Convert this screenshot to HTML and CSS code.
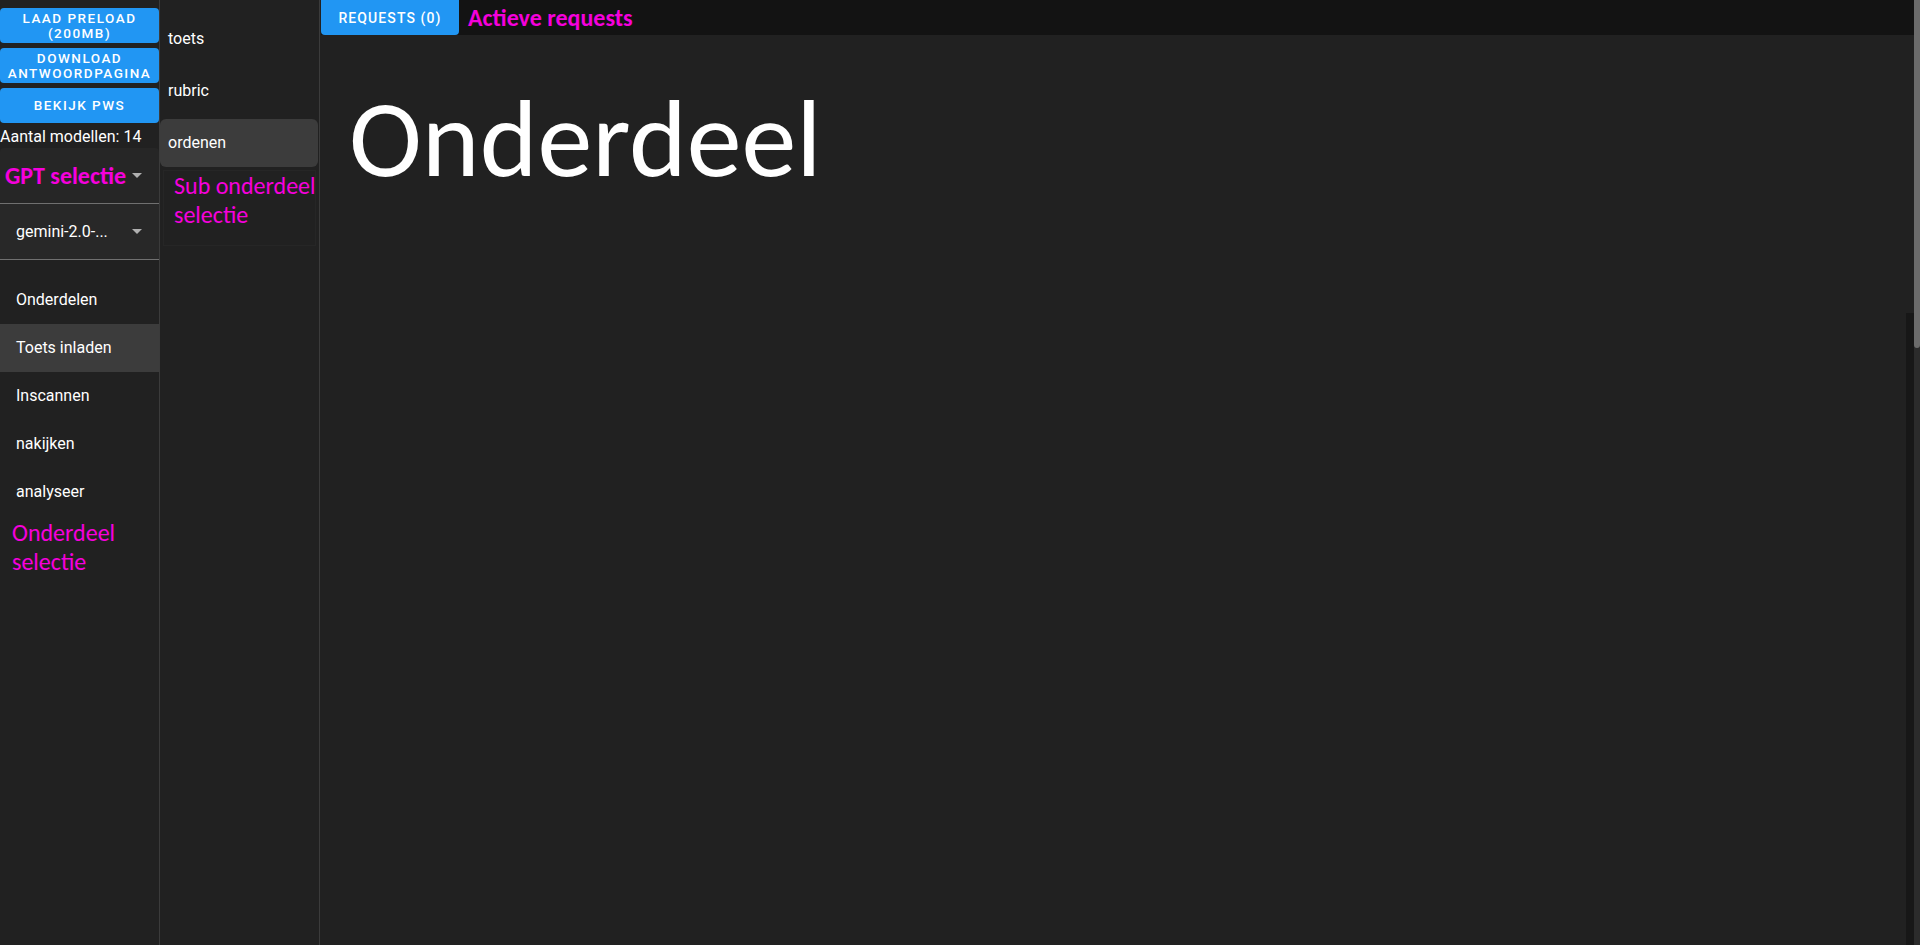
FILE: index.html
```html
<!DOCTYPE html>
<html>
<head>
<meta charset="utf-8">
<link rel="stylesheet" href="styles.css">
</head>
<body>
<div class="app">
  <aside class="side">
    <div class="btns">
      <button class="btn">Laad preload<br>(200MB)</button>
      <button class="btn">Download<br>antwoordpagina</button>
      <button class="btn">Bekijk PWS</button>
    </div>
    <div class="count">Aantal modellen: 14</div>
    <div class="select gpt"><span class="note bold">GPT selectie</span><span class="caret"></span></div>
    <div class="select model"><span class="val">gemini-2.0-...</span><span class="caret"></span></div>
    <nav class="nav">
      <div class="nav-item">Onderdelen</div>
      <div class="nav-item active">Toets inladen</div>
      <div class="nav-item">Inscannen</div>
      <div class="nav-item">nakijken</div>
      <div class="nav-item">analyseer</div>
    </nav>
    <div class="note side-note">Onderdeel<br>selectie</div>
  </aside>
  <aside class="sub">
    <div class="sub-list">
      <div class="sub-item">toets</div>
      <div class="sub-item">rubric</div>
      <div class="sub-item active">ordenen</div>
    </div>
    <div class="note sub-note">Sub onderdeel<br>selectie</div>
  </aside>
  <main class="main">
    <header class="topbar">
      <button class="req">Requests (0)</button>
      <span class="note bold top-note">Actieve requests</span>
    </header>
    <section class="content">
      <h1 class="title">Onderdeel</h1>
      <div class="edge"></div>
    </section>
  </main>
  <div class="scroll"><div class="thumb"></div></div>
</div>
</body>
</html>
```

FILE: styles.css
```css
* { box-sizing: border-box; }
html, body { margin: 0; height: 100%; }
body {
  background: #212121;
  color: #fff;
  font-family: Roboto, "Liberation Sans", sans-serif;
  overflow: hidden;
}
.app { display: flex; height: 945px; }
.side {
  width: 160px;
  flex: none;
  border-right: 1px solid #3b3b3b;
  background: #212121;
  display: flex;
  flex-direction: column;
}
.btns { display: flex; flex-direction: column; gap: 5px; padding-top: 8px; width: 159px; }
.btn {
  height: 35px;
  border: 0;
  border-radius: 4px;
  background: #2196f3;
  color: #fff;
  font-family: Roboto, sans-serif;
  font-weight: 500;
  font-size: 13.5px;
  line-height: 15px;
  letter-spacing: 1.5px;
  text-transform: uppercase;
  padding: 0;
}
.count { font-size: 16px; height: 25px; line-height: 27px; padding-left: 0; }
.select {
  height: 56px;
  width: 159px;
  display: flex;
  align-items: center;
  justify-content: space-between;
  padding: 0 17px 0 5px;
  border-bottom: 1px solid #707070;
}
.gpt { background: #262626; margin-top: 0; border-radius: 4px 4px 0 0; }
.model { background: #282828; padding-left: 16px; }
.val { font-size: 16px; }
.caret {
  width: 0; height: 0;
  border-left: 5px solid transparent;
  border-right: 5px solid transparent;
  border-top: 5px solid #b0b0b0;
}
.note {
  color: #f500dc;
  font-family: Carlito, "Open Sans", sans-serif;
  font-size: 24px;
  line-height: 29px;
}
.bold { font-weight: 700; }
.nav { padding-top: 16px; }
.nav-item { height: 48px; line-height: 48px; padding-left: 16px; font-size: 16px; }
.nav-item.active { background: #3c3c3c; }
.side-note { padding-left: 12px; margin-top: 2px; }
.sub {
  width: 160px;
  flex: none;
  border-right: 1px solid #3b3b3b;
  margin-right: 1px;
}
.sub-list { padding-top: 15px; display: flex; flex-direction: column; gap: 4px; }
.sub-item { height: 48px; line-height: 48px; padding-left: 8px; font-size: 16px; }
.sub-item.active { background: #3c3c3c; border-radius: 6px; margin-right: 1px; }
.sub-note {
  margin: 3px 3px 0 3px;
  padding: 0 0 0 10px;
  height: 76px;
  white-space: nowrap;
  border: 1px solid #262626;
}
.main { flex: 1; display: flex; flex-direction: column; background: #212121; }
.topbar {
  height: 35px;
  flex: none;
  background: #131313;
  display: flex;
  align-items: center;
  gap: 9px;
}
.req {
  height: 35px;
  width: 138px;
  border: 0;
  border-radius: 0 0 4px 4px;
  background: #2196f3;
  color: #fff;
  font-family: Roboto, sans-serif;
  font-weight: 500;
  font-size: 14px;
  letter-spacing: 1.1px;
  text-transform: uppercase;
}
.top-note { line-height: 35px; }
.content { flex: 1; position: relative; padding: 34px 0 0 28px; }
.title {
  margin: 0;
  font-family: Carlito, "Open Sans", sans-serif;
  font-weight: 400;
  font-size: 110px;
  line-height: 140px;
}
.edge { position: absolute; right: 0; top: 278px; bottom: 0; width: 8px; background: #171717; }
.scroll { width: 6px; flex: none; background: #2b2b2b; }
.thumb { height: 348px; background: #6b6b6b; border-radius: 0 0 3px 3px; }
```
